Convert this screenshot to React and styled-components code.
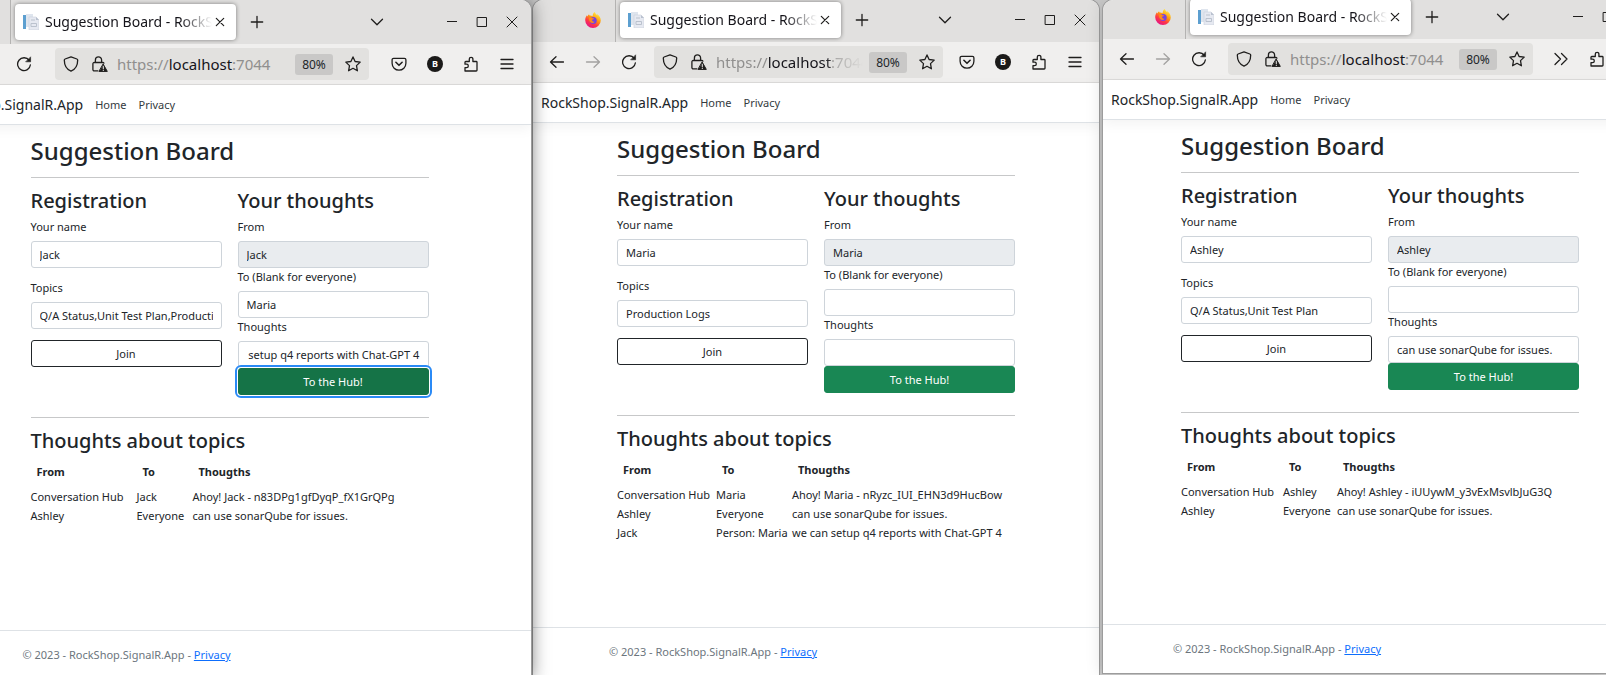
import React, { useEffect, useRef } from 'react';
import styled, { createGlobalStyle, css } from 'styled-components';

const Global = createGlobalStyle`
  *, *::before, *::after { box-sizing: border-box; }
  body { margin: 0; background: #cdcdcd; color: #212529; font-family: "Noto Sans", "Open Sans", sans-serif; font-size: 11px; line-height: 17px; }
  button, input { font: inherit; color: inherit; }
  h1, h2 { margin: 0; font-weight: 500; }
`;

/* ---------- desktop and windows ---------- */

const Desktop = styled.div`
  display: grid;
  grid-template-columns: minmax(0, 531fr) minmax(0, 568fr) minmax(0, 507fr);
  align-items: start;
  height: 100vh;
  overflow: hidden;
`;

const Frame = styled.section`
  position: relative;
  z-index: ${(p) => p.$level};
  margin-left: ${(p) => p.$gap}px;
  height: calc(100vh + ${(p) => p.$extend}px);
  overflow: hidden;
  background: #fff;
  border-radius: ${(p) => (p.$cropLeft ? 0 : 10)}px ${(p) => (p.$cropRight ? 0 : 10)}px 0 0;
  box-shadow: 0 0 0 1px #9c9c9c, 0 0 18px rgba(0, 0, 0, ${(p) => p.$shade});
`;

const Browser = styled.div`
  display: flex;
  flex-direction: column;
  height: 100%;
  margin-left: -${(p) => p.$cropLeft}px;
  margin-right: -${(p) => p.$cropRight}px;
`;

/* ---------- browser chrome ---------- */

const TabStrip = styled.header`
  display: flex;
  align-items: flex-end;
  flex: none;
  height: ${(p) => p.$height}px;
  padding-right: 4px;
  background: #e1e0df;
`;

const PinnedTab = styled.button`
  display: flex;
  align-items: center;
  justify-content: flex-end;
  width: 83px;
  height: 44px;
  padding: 0 14px 0 0;
  border: 0;
  border-right: 1px solid #b4b3b2;
  background: none;
`;

const Tab = styled.div`
  display: flex;
  align-items: center;
  width: 221px;
  height: 36px;
  margin: 0 0 4px 4px;
  padding: 0 8px;
  border-radius: 4px;
  background: #fff;
  box-shadow: 0 0 4px rgba(0, 0, 0, 0.45);
`;

const TabTitle = styled.span`
  flex: 1;
  min-width: 0;
  margin-left: 6px;
  overflow: hidden;
  white-space: nowrap;
  font-size: 14px;
  line-height: 20px;
  color: #15141a;
  mask-image: linear-gradient(to left, transparent, #000 32px);
`;

const IconButton = styled.button`
  display: flex;
  align-items: center;
  justify-content: center;
  flex: none;
  width: ${(p) => p.$width || 32}px;
  height: 32px;
  padding: 0;
  border: 0;
  background: none;
  color: #1f1e1d;
  &:disabled { color: #a3a2a1; }
`;

const StripControls = styled.div`
  display: flex;
  align-items: center;
  flex: 1;
  height: 44px;
  padding-left: 5px;
`;

const Spacer = styled.div`
  flex: 1;
`;

const ListTabs = styled.div`
  display: flex;
  margin-right: 44px;
`;

const Toolbar = styled.div`
  display: flex;
  align-items: center;
  flex: none;
  gap: 4px;
  height: 41px;
  padding: 0 8px;
  border-bottom: 1px solid #dcdbda;
  background: #f0efee;
`;

const AddressBar = styled.div`
  display: flex;
  align-items: center;
  flex: 1;
  min-width: 0;
  height: 32px;
  margin: 0 ${(p) => p.$spring + 4}px 0 ${(p) => p.$spring + 5}px;
  border-radius: 4px;
  background: #e2e1df;
`;

const Address = styled.span`
  flex: 1;
  min-width: 0;
  margin: 0 6px 0 4px;
  overflow: hidden;
  white-space: nowrap;
  font-size: 15px;
  line-height: 22px;
  color: #908f8e;
  ${(p) => p.$fade && css`mask-image: linear-gradient(to left, transparent, #000 40px);`}
  b { font-weight: 400; color: #15141a; }
`;

const Zoom = styled.button`
  width: 38px;
  height: 21px;
  margin-right: 4px;
  padding: 0;
  border: 0;
  border-radius: 3px;
  background: #c9c8c7;
  font-size: 12px;
  line-height: 21px;
`;

/* ---------- page ---------- */

const Nav = styled.nav`
  display: flex;
  align-items: center;
  flex: none;
  gap: 12px;
  height: 40px;
  padding: 0 8px;
  border-bottom: 1px solid #dee2e6;
  box-shadow: 0 4px 12px rgba(0, 0, 0, 0.05);
  a { color: #343a40; text-decoration: none; }
`;

const Brand = styled.a`
  && { font-size: 14px; color: #212529; }
`;

const Main = styled.main`
  flex: 1;
  width: 100%;
  max-width: 398px;
  margin: 0 auto;
  padding-top: 11px;
`;

const Title = styled.h1`
  font-size: 24px;
  line-height: 30px;
`;

const Rule = styled.hr`
  height: 1px;
  margin: ${(p) => p.$before}px 0 11px;
  border: 0;
  background: #c7c8c9;
`;

const Heading = styled.h2`
  margin-bottom: 5px;
  font-size: 20px;
  line-height: 24px;
`;

const Columns = styled.div`
  display: grid;
  grid-template-columns: 1fr 1fr;
  gap: 16px;
  align-items: start;
`;

const Form = styled.form`
  display: flex;
  flex-direction: column;
  gap: ${(p) => p.$gap}px;
`;

const FieldBox = styled.div`
  display: flex;
  flex-direction: column;
  gap: 6px;
`;

const Input = styled.input`
  width: 100%;
  height: 27px;
  padding: 4px 8px;
  border: 1px solid #ced4da;
  border-radius: 3px;
  background: ${(p) => (p.disabled ? '#e9ecef' : '#fff')};
  color: #212529;
  opacity: 1;
`;

const Button = styled.button`
  height: 27px;
  padding: 0;
  border: 1px solid #212529;
  border-radius: 3px;
  background: #fff;
  ${(p) => p.$solid && css`
    border-color: #198754;
    background: #198754;
    color: #fff;
  `}
  ${(p) => p.$active && css`
    border-color: #157347;
    background: #157347;
    outline: 2px solid #2a8af6;
    outline-offset: 1px;
    box-shadow: 0 0 0 1px #fff;
  `}
`;

const Table = styled.table`
  width: 100%;
  table-layout: fixed;
  border-collapse: collapse;
  white-space: nowrap;
  th { padding: 5px 6px 7px; text-align: left; font-weight: 700; }
  td { padding: 1px 0; }
`;

const Column = styled.col`
  width: ${(p) => p.$width}px;
`;

const Footer = styled.footer`
  flex: none;
  border-top: 1px solid #dee2e6;
  color: #6c757d;
  a { color: #0d6efd; }
`;

const FooterText = styled.div`
  width: 100%;
  max-width: 414px;
  margin: 0 auto;
  line-height: 48px;
`;

/* ---------- icons ---------- */

const Glyph = ({ size = 16, width = 1.3, children }) => (
  <svg width={size} height={size} viewBox="0 0 16 16" fill="none" stroke="currentColor" strokeWidth={width} strokeLinecap="round" strokeLinejoin="round" aria-hidden="true">
    {children}
  </svg>
);

const BackIcon = () => <Glyph><path d="M14.5 8H1.5M7 2.7 1.5 8 7 13.3" /></Glyph>;
const ForwardIcon = () => <Glyph><path d="M1.5 8h13M9 2.7 14.5 8 9 13.3" /></Glyph>;
const ReloadIcon = () => (
  <Glyph>
    <path d="M13.2 4.4A6.4 6.4 0 1 0 14.4 8.8" />
    <path d="M14.6 1.2v4.6H10z" fill="currentColor" strokeWidth="0.6" />
  </Glyph>
);
const ShieldIcon = () => (
  <Glyph><path d="M8 .8 13.9 3c.5.2.8.6.8 1.1 0 4.8-1.500 9-6.700 11.100C2.800 13.100 1.300 8.900 1.300 4.100c0-.5.3-.9.8-1.100z" /></Glyph>
);
const LockIcon = () => (
  <Glyph>
    <path d="M3.400 6.500V3.900a3.100 3.100 0 0 1 6.200 0v2.600M5.800 14.800H2.200A1.300 1.300 0 0 1 .9 13.500V7.800a1.300 1.300 0 0 1 1.300-1.300h8.600a1.300 1.300 0 0 1 1.100.6" />
    <path d="M11.300 8.300 15.300 15.400H7.300z" fill="currentColor" strokeWidth="1" />
    <path d="M11.300 10.400v2.300M11.300 14.300v.1" stroke="#e2e1df" strokeWidth="1.100" />
  </Glyph>
);
const StarIcon = () => (
  <Glyph><path d="m8 .9 2.100 4.600 5.100.6-3.700 3.500.9 5.200L8 12.300l-4.400 2.500.9-5.200L.8 6.100l5.100-.6z" /></Glyph>
);
const PocketIcon = () => (
  <Glyph>
    <path d="M2.600 2.300h10.800a1.500 1.500 0 0 1 1.500 1.500v3.500a6.900 6.900 0 0 1-13.800 0V3.800a1.500 1.500 0 0 1 1.500-1.500z" />
    <path d="M4.900 6.300 8 9.300l3.100-3" strokeWidth="1.600" />
  </Glyph>
);
const BadgeIcon = () => (
  <svg width="16" height="16" viewBox="0 0 16 16" aria-hidden="true">
    <circle cx="8" cy="8" r="8" fill="#1b1a19" />
    <text x="8" y="11.300" textAnchor="middle" fontSize="9" fontWeight="700" fill="#fff">B</text>
  </svg>
);
const PuzzleIcon = () => (
  <Glyph>
    <path d="M2 15h11.200a.8.8 0 0 0 .8-.8V6.300a.8.800 0 0 0-.8-.8H9.900V3.100a1.800 1.800 0 0 0-3.600 0v2.400H2.800a.8.800 0 0 0-.8.800v1.900h1.600a1.700 1.700 0 0 1 0 3.400H2z" />
  </Glyph>
);
const MenuIcon = () => <Glyph><path d="M2 3.500h12M2 8h12M2 12.500h12" /></Glyph>;
const MoreIcon = () => <Glyph><path d="m2 2.500 5.500 5.500L2 13.500M8.500 2.500 14 8l-5.500 5.500" /></Glyph>;
const PlusIcon = () => <Glyph><path d="M8 2.300v11.400M2.300 8h11.400" /></Glyph>;
const ChevronIcon = () => <Glyph><path d="M2.500 5.300 8 10.700l5.500-5.400" /></Glyph>;
const MinimizeIcon = () => <Glyph width={1}><path d="M3 7.500h10" strokeLinecap="butt" /></Glyph>;
const MaximizeIcon = () => <Glyph width={1}><path d="M3.500 3.500h9v9h-9z" strokeLinejoin="miter" /></Glyph>;
const CloseIcon = () => <Glyph width={1}><path d="m3 3 10 10M13 3 3 13" /></Glyph>;
const TabCloseIcon = () => <Glyph width={1.2}><path d="m4.300 4.300 7.400 7.400M11.700 4.300l-7.400 7.400" /></Glyph>;

const DocumentIcon = () => (
  <svg width="16" height="16" viewBox="0 0 16 16" aria-hidden="true">
    <path d="M0 1h3v14H0z" fill="#5c9fd0" />
    <path d="M3 0h7v13H3z" fill="#dfe5ee" />
    <path d="M6 3h7l3 3v10H6z" fill="#e6e9f1" stroke="#cbd0db" strokeWidth="0.600" />
    <path d="M13 3v3h3z" fill="#b9c1cf" />
    <path d="M8 6h4M8 9.500h5.500v3H8z" fill="none" stroke="#b6bdca" strokeWidth="0.900" />
  </svg>
);

const FirefoxIcon = () => (
  <svg width="16" height="16" viewBox="0 0 16 16" aria-hidden="true">
    <defs>
      <linearGradient id="flame" x1="0.8" y1="0.050" x2="0.250" y2="0.950">
        <stop offset="0" stopColor="#fff04a" />
        <stop offset="0.400" stopColor="#ff980e" />
        <stop offset="0.700" stopColor="#ff3647" />
        <stop offset="1" stopColor="#e31587" />
      </linearGradient>
    </defs>
    <path d="M9.800.1c.3 1.500 1.500 2.300 2.400 3.300.1-.5 0-.8-.1-1.300 2.100 1.400 3.700 3.900 3.700 6.300A7.800 7.800 0 0 1 8 16 7.800 7.800 0 0 1 .2 8.200c0-2 .7-3.600 1.800-4.900.1.600.2.900.4 1.200.3-1 .9-1.700 1.700-2.300 0 .6.200 1 .5 1.400 1.200-.1 2.100.1 3 .6C7.600 2.600 8.300 1 9.800.1z" fill="url(#flame)" />
    <circle cx="8.200" cy="8.500" r="3.500" fill="#7543e3" />
    <path d="M3.900 5.600c1.200-.5 2.600-.3 3.700.6.6 0 1.200.1 1.600.4-.4.900-1.300 1-2.100 1.200-.2 1.500 1.100 2.300 2.500 1.900-.8 1.500-3.300 1.600-4.500.2-1-1.100-1.300-2.700-1.200-4.300z" fill="#ff8a16" />
  </svg>
);

/* ---------- composed parts ---------- */

function Field({ id, label, value, disabled, scrolled }) {
  const ref = useRef(null);
  useEffect(() => {
    if (scrolled) ref.current.scrollLeft = ref.current.scrollWidth;
  }, [scrolled]);
  return (
    <FieldBox>
      <label htmlFor={id}>{label}</label>
      <Input id={id} ref={ref} type="text" defaultValue={value} disabled={disabled} />
    </FieldBox>
  );
}

function Chrome({ strip, spring, fade, compact }) {
  return (
    <>
      <TabStrip $height={strip}>
        <PinnedTab aria-label="Firefox"><FirefoxIcon /></PinnedTab>
        <Tab>
          <DocumentIcon />
          <TabTitle>Suggestion Board - RockShop</TabTitle>
          <IconButton $width={16} aria-label="Close tab"><TabCloseIcon /></IconButton>
        </Tab>
        <StripControls>
          <IconButton aria-label="New tab"><PlusIcon /></IconButton>
          <Spacer />
          <ListTabs><IconButton aria-label="List all tabs"><ChevronIcon /></IconButton></ListTabs>
          <IconButton $width={30} aria-label="Minimize"><MinimizeIcon /></IconButton>
          <IconButton $width={30} aria-label="Maximize"><MaximizeIcon /></IconButton>
          <IconButton $width={30} aria-label="Close"><CloseIcon /></IconButton>
        </StripControls>
      </TabStrip>
      <Toolbar>
        <IconButton aria-label="Back"><BackIcon /></IconButton>
        <IconButton aria-label="Forward" disabled><ForwardIcon /></IconButton>
        <IconButton aria-label="Reload"><ReloadIcon /></IconButton>
        <AddressBar $spring={spring}>
          <IconButton aria-label="Tracking protection"><ShieldIcon /></IconButton>
          <IconButton $width={26} aria-label="Connection"><LockIcon /></IconButton>
          <Address $fade={fade}>https://<b>localhost</b>:7044</Address>
          <Zoom>80%</Zoom>
          <IconButton aria-label="Bookmark"><StarIcon /></IconButton>
        </AddressBar>
        {compact ? (
          <IconButton aria-label="More tools"><MoreIcon /></IconButton>
        ) : (
          <>
            <IconButton aria-label="Pocket"><PocketIcon /></IconButton>
            <IconButton aria-label="Account"><BadgeIcon /></IconButton>
          </>
        )}
        <IconButton aria-label="Extensions"><PuzzleIcon /></IconButton>
        <IconButton aria-label="Menu"><MenuIcon /></IconButton>
      </Toolbar>
    </>
  );
}

function Board({ user, topics, to, thought, active, columns, rows }) {
  return (
    <>
      <Nav>
        <Brand href="#home">RockShop.SignalR.App</Brand>
        <a href="#home">Home</a>
        <a href="#privacy">Privacy</a>
      </Nav>
      <Main>
        <Title>Suggestion Board</Title>
        <Rule $before={11} />
        <Columns>
          <div>
            <Heading>Registration</Heading>
            <Form $gap={11} onSubmit={(e) => e.preventDefault()}>
              <Field id={`${user}-name`} label="Your name" value={user} />
              <Field id={`${user}-topics`} label="Topics" value={topics} />
              <Button>Join</Button>
            </Form>
          </div>
          <div>
            <Heading>Your thoughts</Heading>
            <Form $gap={0} onSubmit={(e) => e.preventDefault()}>
              <Field id={`${user}-from`} label="From" value={user} disabled />
              <Field id={`${user}-to`} label="To (Blank for everyone)" value={to} />
              <Field id={`${user}-thought`} label="Thoughts" value={thought} scrolled={active} />
              <Button $solid $active={active}>To the Hub!</Button>
            </Form>
          </div>
        </Columns>
        <Rule $before={22} />
        <Heading>Thoughts about topics</Heading>
        <Table>
          <colgroup>
            <Column $width={columns[0]} />
            <Column $width={columns[1]} />
            <col />
          </colgroup>
          <thead>
            <tr><th>From</th><th>To</th><th>Thougths</th></tr>
          </thead>
          <tbody>
            {rows.map((row) => (
              <tr key={row[2]}>{row.map((cell) => <td key={cell}>{cell}</td>)}</tr>
            ))}
          </tbody>
        </Table>
      </Main>
      <Footer>
        <FooterText>© 2023 - RockShop.SignalR.App - <a href="#privacy">Privacy</a></FooterText>
      </Footer>
    </>
  );
}

const sessions = [
  {
    frame: { $level: 3, $gap: 0, $extend: 4, $shade: 0.55, $cropLeft: 72, $cropRight: 0 },
    chrome: { strip: 44, spring: 6 },
    board: {
      user: 'Jack', topics: 'Q/A Status,Unit Test Plan,Production Logs', to: 'Maria',
      thought: 'we can setup q4 reports with Chat-GPT 4', active: true, columns: [106, 56],
      rows: [
        ['Conversation Hub', 'Jack', 'Ahoy! Jack - n83DPg1gfDyqP_fX1GrQPg'],
        ['Ashley', 'Everyone', 'can use sonarQube for issues.'],
      ],
    },
  },
  {
    frame: { $level: 1, $gap: 2, $extend: 1, $shade: 0.1, $cropLeft: 0, $cropRight: 0 },
    chrome: { strip: 42, spring: 0, fade: true },
    board: {
      user: 'Maria', topics: 'Production Logs', to: '', thought: '', columns: [99, 76],
      rows: [
        ['Conversation Hub', 'Maria', 'Ahoy! Maria - nRyzc_IUI_EHN3d9HucBow'],
        ['Ashley', 'Everyone', 'can use sonarQube for issues.'],
        ['Jack', 'Person: Maria', 'we can setup q4 reports with Chat-GPT 4'],
      ],
    },
  },
  {
    frame: { $level: 2, $gap: 4, $extend: -2, $shade: 0.15, $cropLeft: 0, $cropRight: 51 },
    chrome: { strip: 39, spring: 4, compact: true },
    board: {
      user: 'Ashley', topics: 'Q/A Status,Unit Test Plan', to: '', thought: 'can use sonarQube for issues.', columns: [102, 54],
      rows: [
        ['Conversation Hub', 'Ashley', 'Ahoy! Ashley - iUUywM_y3vExMsvlbJuG3Q'],
        ['Ashley', 'Everyone', 'can use sonarQube for issues.'],
      ],
    },
  },
];

export default function App() {
  return (
    <>
      <Global />
      <Desktop>
        {sessions.map(({ frame, chrome, board }) => (
          <Frame key={board.user} {...frame}>
            <Browser $cropLeft={frame.$cropLeft} $cropRight={frame.$cropRight}>
              <Chrome {...chrome} />
              <Board {...board} />
            </Browser>
          </Frame>
        ))}
      </Desktop>
    </>
  );
}
